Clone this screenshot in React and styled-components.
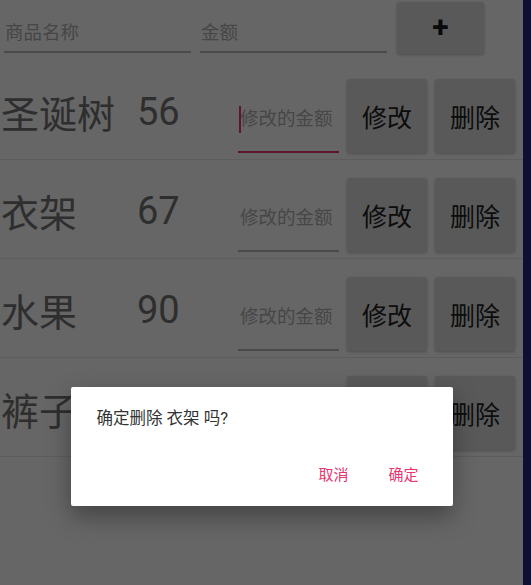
import React from "react";
import styled, { createGlobalStyle } from "styled-components";

// the last row's price sits under the dialog, so it is not shown
const items = [
  { name: "圣诞树", price: 56, focused: true },
  { name: "衣架", price: 67 },
  { name: "水果", price: 90 },
  { name: "裤子", price: null },
];

const App = () => {
  return (
    <>
      <GlobalStyle />
      <Page>
        <AddBar>
          <TopField>商品名称</TopField>
          <TopField>金额</TopField>
          <AddButton>+</AddButton>
        </AddBar>
        {items.map((item) => (
          <ItemRow key={item.name}>
            <ItemName>{item.name}</ItemName>
            <ItemPrice>{item.price}</ItemPrice>
            <EditField focused={item.focused}>
              {item.focused && <Caret />}
              修改的金额
            </EditField>
            <Actions>
              <ActionButton>修改</ActionButton>
              <ActionButton>删除</ActionButton>
            </Actions>
          </ItemRow>
        ))}
        <Overlay>
          <Dialog>
            <DialogTitle>确定删除 衣架 吗?</DialogTitle>
            <DialogButtons>
              <DialogButton>取消</DialogButton>
              <DialogButton>确定</DialogButton>
            </DialogButtons>
          </Dialog>
        </Overlay>
      </Page>
    </>
  );
};

export default App;

const GlobalStyle = createGlobalStyle`
  html, body {
    margin: 0;
    padding: 0;
    background: #0e0f33;
    overflow: hidden;
  }
  body {
    font-family: Roboto, "Noto Sans CJK SC", sans-serif;
  }
`;

const Page = styled.div`
  position: relative;
  width: 523px;
  height: 585px;
  background: #ffffff;
  overflow: hidden;
`;

const AddBar = styled.div`
  display: flex;
  align-items: flex-start;
  height: 61px;
  padding-left: 4px;
  box-sizing: border-box;
`;

const TopField = styled.div`
  width: 187px;
  margin-right: 9px;
  margin-top: 20px;
  height: 33px;
  box-sizing: border-box;
  padding-left: 1px;
  line-height: 27px;
  font-size: 18.5px;
  color: #b0b0b0;
  border-bottom: 2px solid #b8b8b8;
`;

const AddButton = styled.div`
  margin-top: 2px;
  margin-left: 1px;
  width: 87px;
  height: 52px;
  display: flex;
  align-items: center;
  justify-content: center;
  background: #dedede;
  border-radius: 3px;
  box-shadow: 0 1px 3px rgba(0, 0, 0, 0.25);
  font-size: 30px;
  font-weight: 700;
  color: #1a1a1a;
  padding-bottom: 3px;
  box-sizing: border-box;
`;

const ItemRow = styled.div`
  display: grid;
  grid-template-columns: 137px 101px 101px auto;
  align-items: center;
  height: 99px;
  box-sizing: border-box;
  padding: 18px 0 6px;
  border-bottom: 1px solid #e8e8e8;
`;

const ItemName = styled.div`
  font-size: 38px;
  color: #747474;
  white-space: nowrap;
  padding-left: 1px;
  margin-top: -9px;
`;

const ItemPrice = styled.div`
  font-size: 38px;
  color: #747474;
  margin-top: -9px;
`;

const EditField = styled.div`
  position: relative;
  align-self: end;
  font-size: 18.5px;
  line-height: 27px;
  color: #b0b0b0;
  padding: 0 0 18px 2px;
  border-bottom: 2px solid ${(p) => (p.focused ? "#e8356f" : "#b8b8b8")};
  white-space: nowrap;
`;

const Caret = styled.span`
  position: absolute;
  left: 1px;
  top: 0;
  width: 2px;
  height: 27px;
  background: #e8356f;
`;

const Actions = styled.div`
  display: flex;
  gap: 8px;
  margin-left: 8px;
  height: 100%;
`;

const ActionButton = styled.div`
  width: 80px;
  height: 74px;
  display: flex;
  align-items: center;
  justify-content: center;
  background: #dedede;
  border-radius: 3px;
  box-shadow: 0 1px 3px rgba(0, 0, 0, 0.25);
  font-size: 25px;
  color: #222;
`;

const Overlay = styled.div`
  position: absolute;
  inset: 0;
  background: rgba(0, 0, 0, 0.6);
  display: flex;
  justify-content: center;
  align-items: flex-start;
  padding-top: 387px;
  box-sizing: border-box;
`;

const Dialog = styled.div`
  width: 382px;
  height: 119px;
  box-sizing: border-box;
  background: #fff;
  border-radius: 2px;
  box-shadow: 0 10px 24px rgba(0, 0, 0, 0.35);
  display: flex;
  flex-direction: column;
  padding: 20px 17px 15px 26px;
`;

const DialogTitle = styled.div`
  font-size: 16.5px;
  line-height: 24px;
  color: #333;
`;

const DialogButtons = styled.div`
  margin-top: auto;
  display: flex;
  justify-content: flex-end;
  gap: 6px;
`;

const DialogButton = styled.div`
  min-width: 64px;
  height: 36px;
  display: flex;
  align-items: center;
  justify-content: center;
  font-size: 15px;
  color: #e8356f;
`;
